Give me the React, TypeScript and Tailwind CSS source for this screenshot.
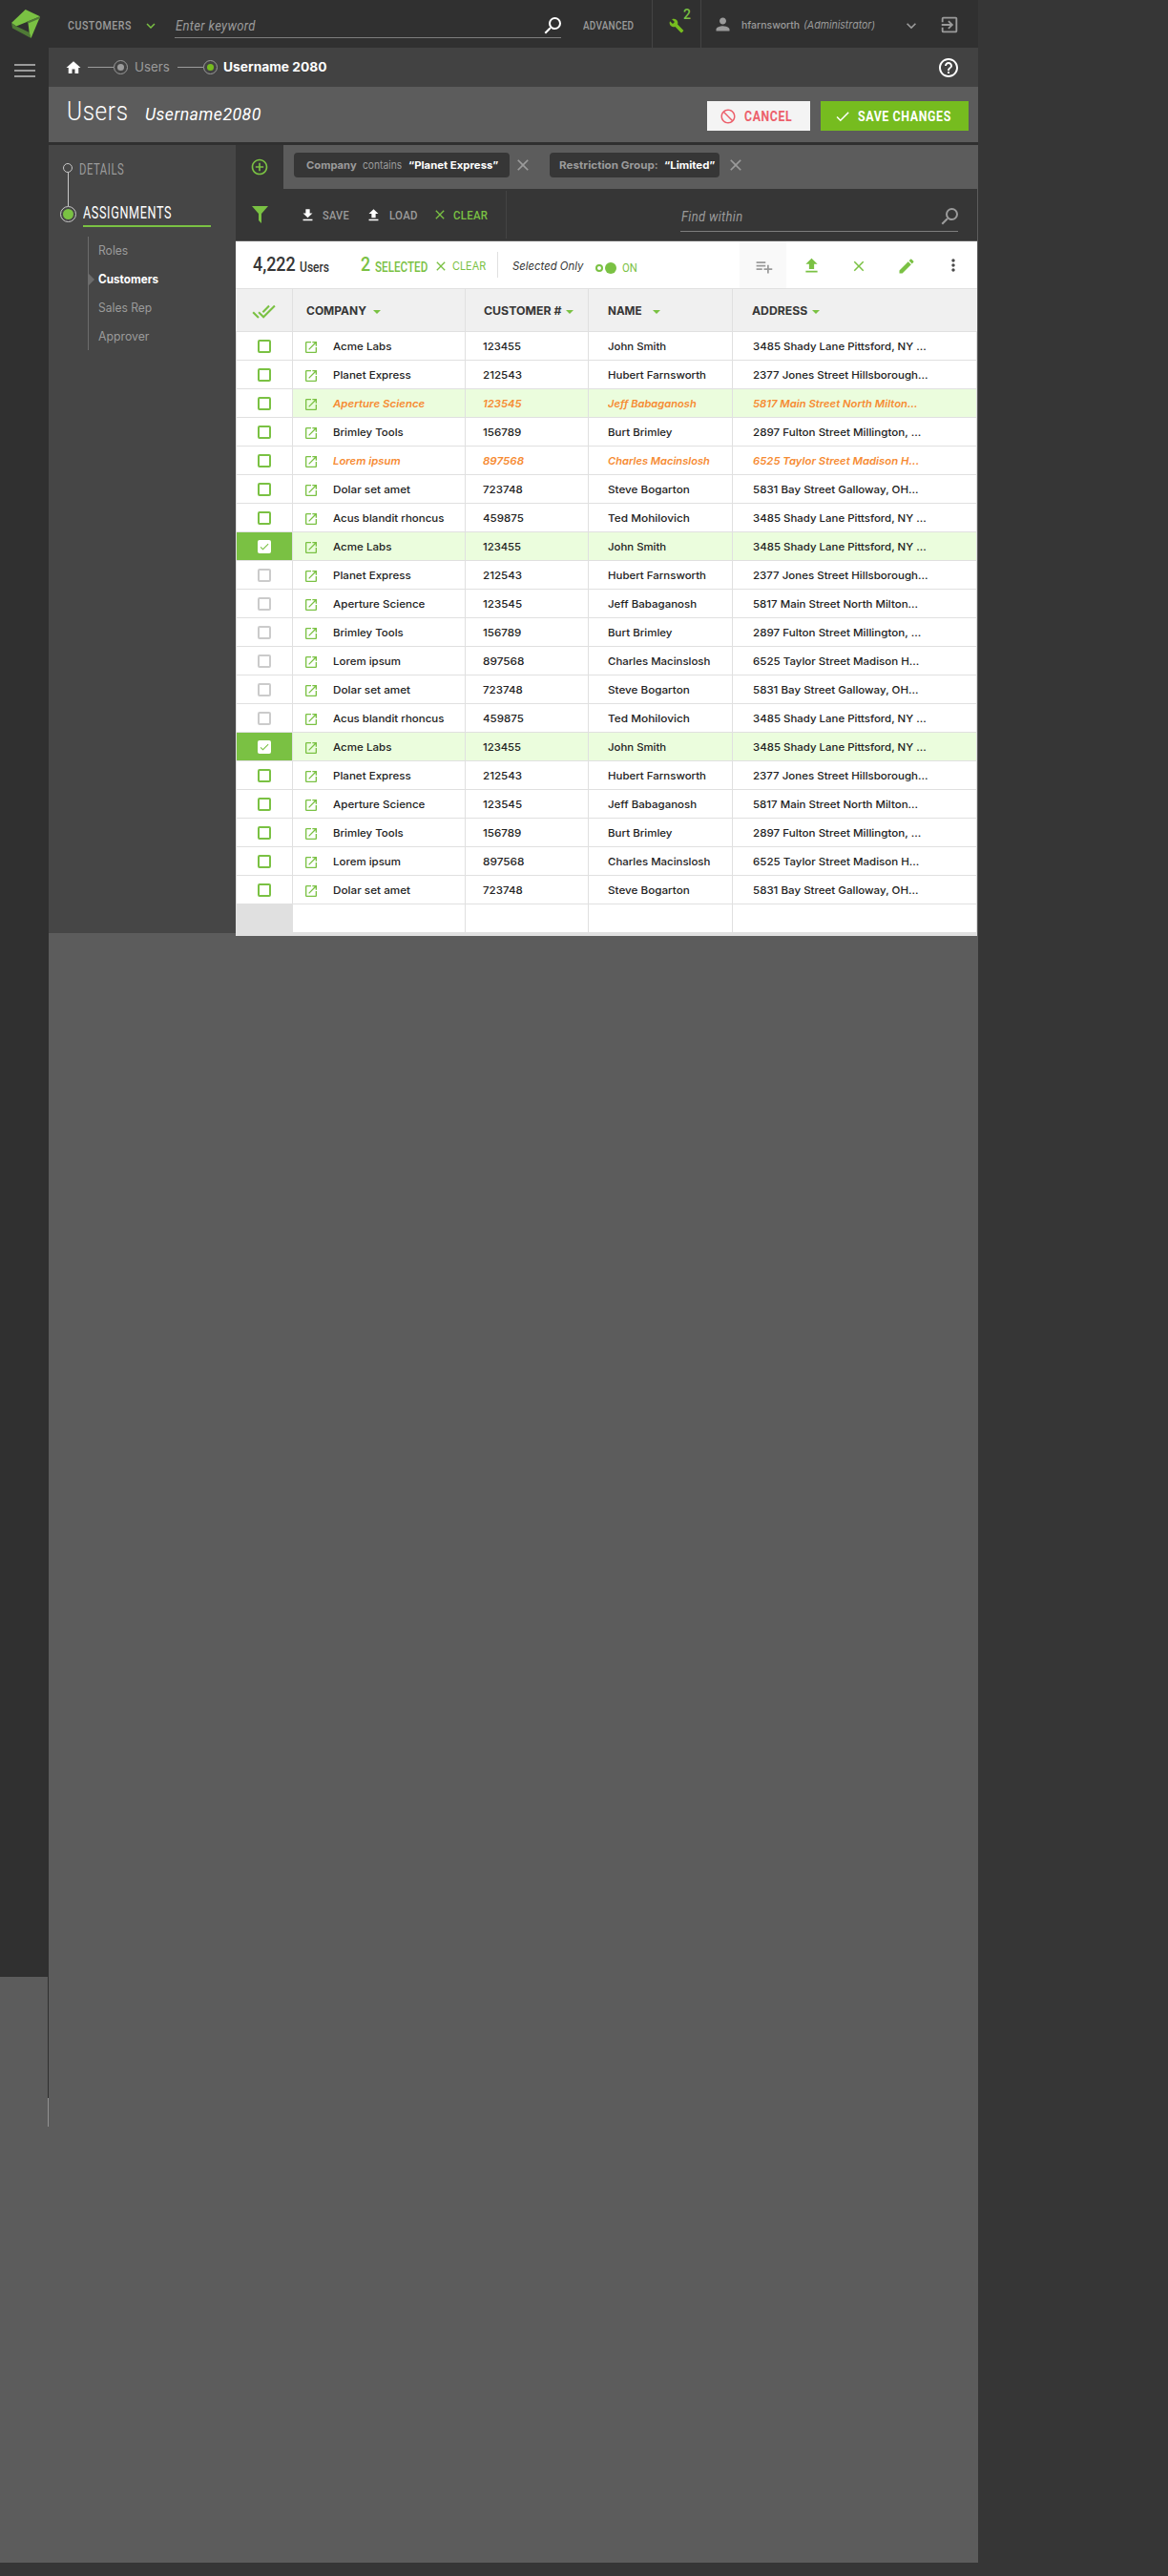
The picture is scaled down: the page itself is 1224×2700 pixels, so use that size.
import { useLayoutEffect, useRef, useState } from "react";
import type { ReactNode } from "react";
import {
  MdAddCircleOutline, MdBuild, MdCheck, MdClose, MdDoNotDisturb, MdDoneAll, MdEdit, MdExitToApp,
  MdFileDownload, MdFileUpload, MdHelpOutline, MdHome, MdKeyboardArrowDown, MdMoreVert, MdOpenInNew,
  MdPerson, MdPlaylistAdd, MdSearch,
} from "react-icons/md";

/** Single line label condensed or expanded to a given width. */
function Fit({ w, className = "", children }: { w: number; className?: string; children: ReactNode }) {
  const ref = useRef<HTMLSpanElement>(null);
  const [scale, setScale] = useState(1);
  useLayoutEffect(() => {
    if (ref.current) setScale(w / ref.current.offsetWidth);
  }, [w]);
  return (
    <span className={"block shrink-0 " + className} style={{ width: w }}>
      <span ref={ref} className="inline-block origin-left whitespace-nowrap" style={{ transform: `scaleX(${scale})` }}>
        {children}
      </span>
    </span>
  );
}

const cond = "font-['Roboto',sans-serif] leading-none ";

function Logo() {
  return (
    <svg viewBox="0 0 30 30" className="mt-[10px] ml-3 h-[30px] w-[30px]">
      <path d="M14.7 0 30 7.3 17.3 12.5 5 17.5 0 14Z" fill="#7ac143" />
      <path d="M0 14 4.7 17.3 18.7 24 20.5 30 1 19.5Z" fill="#4f7a36" />
      <path d="M30 7.5 20.5 30 18.7 24 17.3 13Z" fill="#7ac143" />
      <path d="M30 7.3V9.3L17.5 14.5 16 12.8Z" fill="#4f7a36" />
    </svg>
  );
}

function TopBar() {
  return (
    <div className="flex h-[50px] items-center bg-[#303030] text-[#9b9b9b]">
      <Fit w={67} className={cond + "ml-5 mt-[3px] text-xs font-medium tracking-wider"}>CUSTOMERS</Fit>
      <MdKeyboardArrowDown className="ml-[11px] mt-1 size-[18px] text-[#7ac143]" />
      <div className="ml-[16px] flex h-[30px] w-[405px] items-center border-b border-[#7d7d7d]">
        <Fit w={84} className={cond + "ml-px mt-[4px] text-[14px] italic tracking-wide"}>Enter keyword</Fit>
        <MdSearch className="-mr-[3px] ml-auto mt-1 size-6 -scale-x-100 text-white" />
      </div>
      <Fit w={53} className={cond + "ml-[23px] mt-[3px] text-xs font-medium tracking-wide"}>ADVANCED</Fit>
      <div className="ml-[19px] flex h-full w-[52px] border-x border-[#444]">
        <MdBuild className="ml-[17px] mt-[19px] size-4 text-[#76bc1f]" />
        <Fit w={8} className={cond + "-ml-px mt-2 text-sm font-medium text-[#7ac143]"}>2</Fit>
      </div>
      <MdPerson className="ml-[12px] size-[21px]" />
      <Fit w={61} className="ml-[9px] mt-[3px] font-['Inter',sans-serif] text-[11px] font-medium leading-none">hfarnsworth</Fit>
      <Fit w={75} className="ml-1 mt-[3px] font-['Inter',sans-serif] text-[11px] italic leading-none">(Administrator)</Fit>
      <MdKeyboardArrowDown className="ml-[28px] mt-[3px] size-5" />
      <MdExitToApp className="ml-[19px] mt-[1px] size-[22px]" />
    </div>
  );
}

function Crumb({ dot }: { dot: string }) {
  return (
    <>
      <span className="h-px w-[27px] bg-[#9b9b9b]" />
      <span className="flex size-[15px] items-center justify-center rounded-full border border-[#9b9b9b]">
        <span className={"size-[7px] rounded-full " + dot} />
      </span>
    </>
  );
}

function Breadcrumbs() {
  return (
    <div className="flex h-[41px] items-center bg-[#424242] font-['Inter',sans-serif] text-[13px] leading-none">
      <MdHome className="ml-[17px] mr-1.5 size-[18px] text-white" />
      <Crumb dot="bg-[#9b9b9b]" />
      <Fit w={37} className="ml-[7px] mr-[8px] text-[#9b9b9b]">Users</Fit>
      <Crumb dot="bg-[#76bc1f]" />
      <Fit w={108} className="ml-1.5 font-bold text-white">Username 2080</Fit>
      <MdHelpOutline className="ml-auto mr-[19px] size-6 text-white" />
    </div>
  );
}

function TitleBar() {
  return (
    <div className="flex h-[61px] border-b-[3px] border-[#303030] bg-[#5c5c5c] text-white">
      <Fit w={65} className={cond + "ml-[19px] mt-[13px] text-[27px] font-light tracking-wide"}>Users</Fit>
      <Fit w={122} className={cond + "ml-[17px] mt-[19px] text-[19px] italic tracking-wide"}>Username2080</Fit>
      <button className="ml-auto mt-[15px] flex h-[31px] w-[108px] items-center bg-[#f4f4f4] text-[#ec5f6b]">
        <MdDoNotDisturb className="ml-[13px] size-[18px]" />
        <Fit w={50} className={cond + "ml-[8px] mt-px text-[14px] font-bold tracking-wider"}>CANCEL</Fit>
      </button>
      <button className="ml-[11px] mr-2.5 mt-[15px] flex h-[31px] w-[155px] items-center bg-[#76bc1f]">
        <MdCheck className="ml-[14px] size-[18px]" />
        <Fit w={98} className={cond + "ml-[7px] mt-px text-[14px] font-bold tracking-wider"}>SAVE CHANGES</Fit>
      </button>
    </div>
  );
}

const subs = [
  { label: "Roles", w: 31 },
  { label: "Customers", w: 63 },
  { label: "Sales Rep", w: 56 },
  { label: "Approver", w: 53 },
];

function SideNav() {
  return (
    <div className="h-[826px] w-[196px] bg-[#464646] font-['Inter',sans-serif]">
      <div className="flex h-[86px] pt-[19px]">
        <div className="ml-3 flex w-4 flex-col items-center">
          <span className="size-[10px] shrink-0 rounded-full border border-[#c8c8c8]" />
          <span className="h-[35px] w-px shrink-0 bg-[#c8c8c8]" />
          <span className="flex size-[17px] shrink-0 items-center justify-center rounded-full border border-[#c8c8c8]">
            <span className="size-[11px] rounded-full bg-[#7ac143]" />
          </span>
        </div>
        <div>
          <Fit w={47} className={cond + "ml-1 -mt-[2px] text-[17px] tracking-wider text-[#9b9b9b]"}>DETAILS</Fit>
          <div className="ml-2 mt-[27px] h-[25px] w-[134px] border-b-2 border-[#7ac143]">
            <Fit w={93} className={cond + "text-[19px] tracking-wider text-white"}>ASSIGNMENTS</Fit>
          </div>
        </div>
      </div>
      <div className="ml-[41px] mt-2.5 h-[119px] border-l border-[#6c6c6c] text-[12.5px] leading-[30px] text-[#9b9b9b]">
        {subs.map((s) => (
          <div key={s.label} className="flex h-[30px] items-center">
            <span
              className={
                "mr-1 size-0 border-y-[6px] border-l-[6px] border-y-transparent " +
                (s.label === "Customers" ? "border-l-[#6c6c6c]" : "border-l-transparent")
              }
            />
            <Fit w={s.w} className={s.label === "Customers" ? "font-bold text-white" : ""}>{s.label}</Fit>
          </div>
        ))}
      </div>
    </div>
  );
}

function FilterChips() {
  return (
    <div className="flex h-[46px] bg-[#5c5c5c] font-['Inter',sans-serif] text-[11px] leading-none text-[#9b9b9b]">
      <div className="flex w-[50px] items-center bg-[#363636]">
        <MdAddCircleOutline className="ml-[15px] size-5 text-[#7ac143]" />
      </div>
      <div className="ml-[11px] mt-2 flex h-[26px] w-[226px] items-center rounded-sm bg-[#363636]">
        <Fit w={53} className="ml-[13px] mt-px font-bold">Company</Fit>
        <Fit w={41} className="ml-1.5 mt-px">contains</Fit>
        <Fit w={94} className="ml-[7px] mt-px font-bold text-white">“Planet Express”</Fit>
      </div>
      <MdClose className="ml-[4px] mt-[11px] size-[20px]" />
      <div className="ml-[18px] mt-2 flex h-[26px] w-[178px] items-center rounded-sm bg-[#363636]">
        <Fit w={104} className="ml-[10px] mt-px font-bold">Restriction Group:</Fit>
        <Fit w={53} className="ml-[6px] mt-px font-bold text-white">“Limited”</Fit>
      </div>
      <MdClose className="ml-[7px] mt-[11px] size-[20px]" />
    </div>
  );
}

function FilterTools() {
  return (
    <div className="mr-px flex h-[54px] items-center bg-[#363636] text-[#9b9b9b]">
      <svg viewBox="0 0 17 18" className="ml-[17px] h-[18px] w-[17px] fill-[#7ac143]">
        <path d="M0 0H17L10 8V18L7 15V8Z" />
      </svg>
      <MdFileDownload className="ml-[33px] size-[17px] text-white" />
      <Fit w={28} className={cond + "ml-[7px] text-[13px] font-medium tracking-wide"}>SAVE</Fit>
      <MdFileUpload className="ml-[17px] size-[17px] text-white" />
      <Fit w={30} className={cond + "ml-2 text-[13px] font-medium tracking-wide"}>LOAD</Fit>
      <MdClose className="ml-[15px] size-[16px] text-[#7ac143]" />
      <Fit w={36} className={cond + "ml-[6px] text-[13px] font-medium tracking-wide text-[#7ac143]"}>CLEAR</Fit>
      <div className="ml-[19px] h-[50px] w-px bg-[#444]" />
      <div className="ml-auto mr-5 mt-[5px] flex h-[30px] w-[291px] items-center border-b border-[#7d7d7d]">
        <Fit w={64} className={cond + "ml-px text-[14px] italic tracking-wide"}>Find within</Fit>
        <MdSearch className="-mr-[3px] ml-auto size-6 -scale-x-100" />
      </div>
    </div>
  );
}

function Summary() {
  return (
    <div className="flex h-[49px] items-center bg-white text-[#7ac143]">
      <Fit w={45} className={cond + "ml-[18px] text-[19.5px] font-medium text-[#363636]"}>4,222</Fit>
      <Fit w={31} className={cond + "ml-[4px] mt-1 text-[14px] font-medium text-[#363636]"}>Users</Fit>
      <Fit w={10} className={cond + "ml-[33px] text-[19.5px] font-medium"}>2</Fit>
      <Fit w={55} className={cond + "ml-[5px] mt-1 text-[14px] font-medium"}>SELECTED</Fit>
      <MdClose className="ml-[6px] mt-[3px] size-[16px]" />
      <Fit w={35} className="ml-1 mt-1 font-['Inter',sans-serif] text-[11.5px] leading-none">CLEAR</Fit>
      <div className="ml-[12px] h-[27px] w-px bg-[#e0e0e0]" />
      <Fit w={74} className="ml-[15px] mt-1 font-['Inter',sans-serif] text-[11.5px] italic leading-none text-[#363636]">Selected Only</Fit>
      <span className="ml-[13px] mt-1.5 size-2 rounded-full border-2 border-[#7ac143]" />
      <span className="ml-[2px] mt-1.5 size-3 rounded-full bg-[#7ac143]" />
      <Fit w={16} className={cond + "ml-[6px] mt-[6px] text-[12px]"}>ON</Fit>
      <div className="ml-auto flex h-full w-[49px] items-center bg-[#f9f9f9]">
        <MdPlaylistAdd className="ml-[15px] mt-1 size-[21px] text-[#9b9b9b]" />
      </div>
      <MdFileUpload className="ml-[16px] mt-[2px] size-[21px]" />
      <MdClose className="ml-[30px] mt-[2px] size-[18px]" />
      <MdEdit className="ml-[31px] mt-[2px] size-[20px]" />
      <MdMoreVert className="ml-[29px] mr-[15px] size-[20px] text-[#4a4a4a]" />
    </div>
  );
}

function Head({ label, w, gap, className }: { label: string; w: number; gap: string; className: string }) {
  return (
    <div className={"flex items-center pt-0.5 " + className}>
      <Fit w={w}>{label}</Fit>
      <span className={"mt-0.5 size-0 border-x-[4px] border-t-[4px] border-x-transparent border-t-[#7ac143] " + gap} />
    </div>
  );
}

type Kind = "open" | "dim" | "checked" | "edited" | "editedPlain";
type Text = [string, number];

const base: Text[][] = [
  [["Acme Labs", 61], ["123455", 40], ["John Smith", 61], ["3485 Shady Lane Pittsford, NY ...", 182]],
  [["Planet Express", 82], ["212543", 41], ["Hubert Farnsworth", 103], ["2377 Jones Street Hillsborough...", 183]],
  [["Aperture Science", 96], ["123545", 41], ["Jeff Babaganosh", 93], ["5817 Main Street North Milton...", 173]],
  [["Brimley Tools", 74], ["156789", 40], ["Burt Brimley", 67], ["2897 Fulton Street Millington, ...", 176]],
  [["Lorem ipsum", 71], ["897568", 43], ["Charles Macinslosh", 107], ["6525 Taylor Street Madison H...", 174]],
  [["Dolar set amet", 81], ["723748", 42], ["Steve Bogarton", 86], ["5831 Bay Street Galloway, OH...", 173]],
  [["Acus blandit rhoncus", 116], ["459875", 43], ["Ted Mohilovich", 86], ["3485 Shady Lane Pittsford, NY ...", 182]],
];

function kindOf(i: number): Kind {
  if (i === 2) return "edited";
  if (i === 4) return "editedPlain";
  if (i === 7 || i === 14) return "checked";
  return i > 7 && i < 14 ? "dim" : "open";
}

const grid = "grid grid-cols-[60px_181px_129px_151px_1fr]";

function Box({ kind }: { kind: Kind }) {
  if (kind === "checked") {
    return (
      <span className="flex size-[14px] items-center justify-center rounded-[2px] bg-white">
        <MdCheck className="size-3 text-[#7ac143]" />
      </span>
    );
  }
  return <span className={"size-[14px] rounded-[2px] border-2 " + (kind === "dim" ? "border-[#cbcbcb]" : "border-[#7ac143]")} />;
}

function Row({ cells, kind }: { cells: Text[]; kind: Kind }) {
  const edited = kind === "edited" || kind === "editedPlain";
  const tint = kind === "checked" || kind === "edited" ? "bg-[#ebfddd] " : "";
  const tone = edited ? "font-semibold italic text-[#f68b33]" : "font-medium text-[#222]";
  const cell = tint + "flex items-center border-b border-r border-[#e0e0e0] pt-0.5 ";
  const [company, num, name, address] = cells;
  return (
    <div className={grid + " h-[30px] font-['Inter',sans-serif] text-[11px] leading-none " + tone}>
      <div
        className={
          "flex items-center border-b border-x border-[#e0e0e0] pl-[22px] " + (kind === "checked" ? "bg-[#7ac143]" : "")
        }
      >
        <Box kind={kind} />
      </div>
      <div className={cell}>
        <MdOpenInNew className="ml-[11px] size-4 text-[#7ac143]" />
        <Fit w={company[1]} className="ml-[15px]">{company[0]}</Fit>
      </div>
      <div className={cell + "pl-[18px]"}><Fit w={num[1]}>{num[0]}</Fit></div>
      <div className={cell + "pl-5"}><Fit w={name[1]}>{name[0]}</Fit></div>
      <div className={cell + "pl-[21px]"}><Fit w={address[1]}>{address[0]}</Fit></div>
    </div>
  );
}

function Table() {
  return (
    <div className="mr-px bg-white">
      <div className={grid + " h-[46px] border-y border-[#e0e0e0] bg-[#f0f0f0] font-['Inter',sans-serif] text-[12px] font-bold leading-none text-[#363636]"}>
        <div className="flex items-center border-r border-[#e0e0e0] pt-0.5"><MdDoneAll className="ml-[17px] size-[25px] text-[#7ac143]" /></div>
        <Head label="COMPANY" w={63} gap="ml-[7px]" className="border-r border-[#e0e0e0] pl-[14px]" />
        <Head label="CUSTOMER #" w={81} gap="ml-[5px]" className="border-r border-[#e0e0e0] pl-[19px]" />
        <Head label="NAME" w={36} gap="ml-[11px]" className="border-r border-[#e0e0e0] pl-5" />
        <Head label="ADDRESS" w={58} gap="ml-[5px]" className="pl-5" />
      </div>
      {Array.from({ length: 20 }, (_, i) => (
        <Row key={i} cells={base[i % 7]} kind={kindOf(i)} />
      ))}
      <div className={grid + " h-[33px] border-b-4 border-r border-[#e0e0e0]"}>
        <div className="bg-[#e0e0e0]" />
        <div className="border-r border-[#e0e0e0]" />
        <div className="border-r border-[#e0e0e0]" />
        <div className="border-r border-[#e0e0e0]" />
      </div>
    </div>
  );
}

export default function App() {
  return (
    <div className="flex h-[2700px] w-[1224px] items-start bg-[#363636]">
      <div className="flex h-[2686px] w-[1025px] bg-[#5c5c5c]">
        <div className="h-[2072px] w-[50px] bg-[#303030]">
          <Logo />
          <div className="ml-[15px] mt-[27px] flex w-[22px] flex-col gap-1">
            <span className="h-[2px] bg-[#9b9b9b]" />
            <span className="h-[2px] bg-[#9b9b9b]" />
            <span className="h-[2px] bg-[#9b9b9b]" />
          </div>
        </div>
        <div className="w-px">
          <div className="h-[2199px] bg-[#303030]" />
          <div className="h-[30px] bg-[#919191]" />
        </div>
        <div className="w-[974px]">
          <TopBar />
          <Breadcrumbs />
          <TitleBar />
          <div className="flex items-start">
            <SideNav />
            <div className="w-[778px]">
              <FilterChips />
              <FilterTools />
              <div className="mr-px mt-px"><Summary /></div>
              <Table />
            </div>
          </div>
        </div>
      </div>
    </div>
  );
}
